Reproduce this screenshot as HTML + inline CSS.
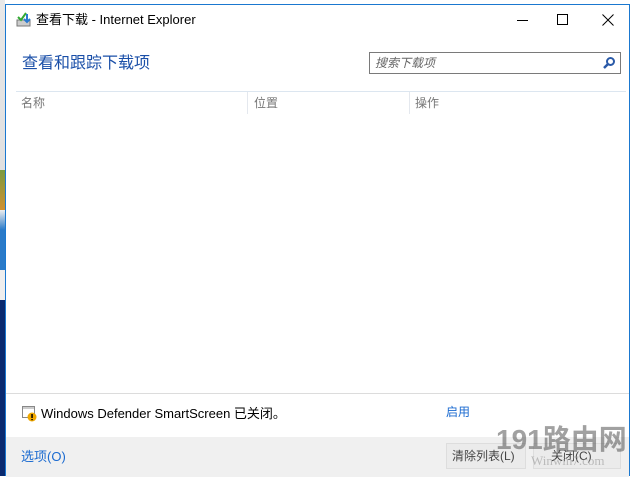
<!DOCTYPE html>
<html><head><meta charset="utf-8"><style>
*{margin:0;padding:0;box-sizing:border-box}
body{width:633px;height:476px;overflow:hidden;background:#fff;font-family:"Liberation Sans","Noto Sans CJK SC",sans-serif;position:relative}
.strip{position:absolute;left:0;top:0;width:5px;height:476px;background:linear-gradient(#e8e8e8 0,#e0e0e0 170px,#7a9a40 170px,#d09030 210px,#eee 210px,#2a7ac8 230px,#2a7ac8 270px,#eee 270px,#eee 300px,#0a2a70 300px,#0a2a70 476px)}
.win{position:absolute;left:5px;top:4px;width:625px;height:472px;border:1px solid #1a78d0;border-bottom:none;background:#fff}
.abs{position:absolute;white-space:nowrap}
</style></head><body>
<div class="strip"></div>
<div class="win">
 <svg class="abs" style="left:9px;top:6px" width="18" height="18" viewBox="0 0 18 18"><rect x="2" y="9" width="13" height="6" fill="#ccc" stroke="#777"/><path d="M3 6l3 3 5-7" stroke="#3a3" stroke-width="2" fill="none"/><path d="M12 3v7M9 8l3 3 3-3" stroke="#2a7ad0" stroke-width="2" fill="none"/></svg>
 <div class="abs" style="left:30px;top:4px;font-size:13px;color:#000">查看下载 - Internet Explorer</div>
 <div class="abs" style="left:511px;top:15px;width:11px;height:1px;background:#000"></div>
 <div class="abs" style="left:551px;top:9px;width:11px;height:11px;border:1px solid #000"></div>
 <svg class="abs" style="left:596px;top:9px" width="12" height="12"><path d="M0.5 0.5L11.5 11.5M11.5 0.5L0.5 11.5" stroke="#000"/></svg>
 <div class="abs" style="left:16px;top:44px;font-size:16px;color:#1a4fa8">查看和跟踪下载项</div>
 <div class="abs" style="left:363px;top:47px;width:252px;height:22px;border:1px solid #7a7a7a"></div>
 <div class="abs" style="left:369px;top:49px;font-size:12px;color:#666;font-style:italic">搜索下载项</div>
 <svg class="abs" style="left:596px;top:51px" width="14" height="14"><circle cx="8.5" cy="5.5" r="3.5" stroke="#2a5aa8" stroke-width="2" fill="none"/><path d="M6 8L2 12" stroke="#2a5aa8" stroke-width="2.5"/></svg>
 <div class="abs" style="left:10px;top:86px;width:610px;height:1px;background:#dce6f0"></div>
 <div class="abs" style="left:241px;top:87px;width:1px;height:22px;background:#e4e8ee"></div>
 <div class="abs" style="left:403px;top:87px;width:1px;height:22px;background:#e4e8ee"></div>
 <div class="abs" style="left:15px;top:89px;font-size:12px;color:#777">名称</div>
 <div class="abs" style="left:248px;top:89px;font-size:12px;color:#777">位置</div>
 <div class="abs" style="left:409px;top:89px;font-size:12px;color:#777">操作</div>
 <div class="abs" style="left:0;top:388px;width:623px;height:1px;background:#dcdcdc"></div>
 <svg class="abs" style="left:16px;top:401px" width="16" height="16"><rect x="0.5" y="0.5" width="12" height="11" fill="#fff" stroke="#888"/><rect x="1" y="1" width="11" height="2" fill="#ccc"/><circle cx="10" cy="11" r="4.5" fill="#f0a800"/><rect x="9.3" y="8" width="1.5" height="4" fill="#000"/><rect x="9.3" y="13" width="1.5" height="1.2" fill="#000"/></svg>
 <div class="abs" style="left:35px;top:398px;font-size:13px;color:#000">Windows Defender SmartScreen 已关闭。</div>
 <div class="abs" style="left:440px;top:398px;font-size:12px;color:#1a6ad0">启用</div>
 <div class="abs" style="left:0;top:432px;width:623px;height:40px;background:#f0f0f0"></div>
 <div class="abs" style="left:15px;top:441px;font-size:13px;color:#1a6ad0">选项(O)</div>
 <div class="abs" style="left:440px;top:438px;width:80px;height:26px;border:1px solid #ddd;background:#ebebeb"></div>
 <div class="abs" style="left:446px;top:442px;font-size:12px;color:#444">清除列表(L)</div>
 <div class="abs" style="left:527px;top:438px;width:88px;height:26px;border:1px solid #ddd;background:#ebebeb"></div>
 <div class="abs" style="left:545px;top:442px;font-size:12px;color:#444">关闭(C)</div>
 <div class="abs" style="left:490px;top:413px;font-size:28px;font-weight:bold;color:#555;opacity:.55">191路由网</div>
 <div class="abs" style="left:525px;top:448px;font-size:13px;font-family:'Liberation Serif',serif;color:#999;opacity:.6">Winwin7.com</div>
</div>
</body></html>
